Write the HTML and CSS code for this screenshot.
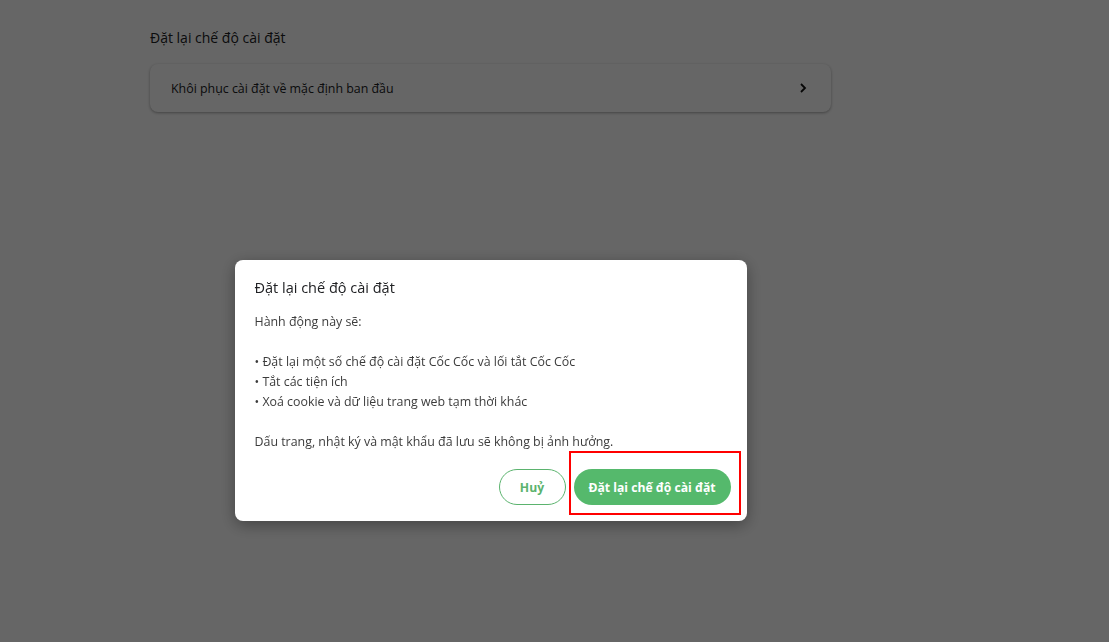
FILE: index.html
```html
<!DOCTYPE html>
<html lang="vi">
<head>
<meta charset="utf-8">
<title>Cài đặt</title>
<link rel="stylesheet" href="styles.css">
</head>
<body>
  <main class="settings">
    <h2 class="section-title">Đặt lại chế độ cài đặt</h2>
    <div class="card">
      <div class="row">
        <span>Khôi phục cài đặt về mặc định ban đầu</span>
        <svg class="chev" width="12" height="12" viewBox="0 0 12 12"><path d="M4 2l4 4-4 4" fill="none" stroke="#111" stroke-width="1.8"/></svg>
      </div>
    </div>
  </main>

  <div class="scrim">
    <div class="dialog">
      <h3 class="dialog-title">Đặt lại chế độ cài đặt</h3>
      <div class="dialog-body">
        <p>Hành động này sẽ:</p>
        <p>• Đặt lại một số chế độ cài đặt Cốc Cốc và lối tắt Cốc Cốc<br>• Tắt các tiện ích<br>• Xoá cookie và dữ liệu trang web tạm thời khác</p>
        <p>Dấu trang, nhật ký và mật khẩu đã lưu sẽ không bị ảnh hưởng.</p>
      </div>
      <div class="actions">
        <button class="btn btn-outline">Huỷ</button>
        <button class="btn btn-primary">Đặt lại chế độ cài đặt</button>
        <span class="focus-mark"></span>
      </div>
    </div>
  </div>
</body>
</html>
```

FILE: styles.css
```css
html, body {
  margin: 0;
  height: 100%;
}
body {
  font-family: "Segoe UI", "Open Sans", "Noto Sans", sans-serif;
  background: #ffffff;
  color: #202124;
  overflow: hidden;
}
.settings {
  padding: 28px 0 0 150px;
  width: 681px;
}
.section-title {
  margin: 0 0 16px 0;
  font-size: 14px;
  font-weight: 400;
  line-height: 20px;
}
.card {
  background: #ffffff;
  border-radius: 8px;
  box-shadow: 0 1px 3px rgba(0,0,0,0.35);
}
.row {
  height: 48px;
  display: flex;
  align-items: center;
  justify-content: space-between;
  padding: 0 22px 0 21px;
  font-size: 12.4px;
}
.scrim {
  position: fixed;
  inset: 0;
  background: rgba(0,0,0,0.6);
  display: flex;
  justify-content: center;
  padding-top: 260px;
  box-sizing: border-box;
}
.dialog {
  position: relative;
  align-self: flex-start;
  margin-left: -128px;
  width: 512px;
  height: 261px;
  box-sizing: border-box;
  background: #ffffff;
  border-radius: 8px;
  padding: 17px 16px 16px 20px;
  box-shadow: 0 4px 16px rgba(0,0,0,0.35);
}
.dialog-title {
  margin: 0 0 13px 0;
  font-size: 14.5px;
  font-weight: 400;
  line-height: 22px;
  color: #202124;
}
.dialog-body {
  font-size: 12.4px;
  line-height: 20px;
  color: #3c3c3c;
}
.dialog-body p {
  margin: 0 0 20px 0;
}
.dialog-body p:last-child {
  margin-bottom: 0;
}
.actions {
  position: relative;
  display: flex;
  justify-content: flex-end;
  gap: 8px;
  margin-top: 17px;
}
.btn {
  height: 36px;
  border-radius: 18px;
  font-family: inherit;
  font-size: 12.2px;
  font-weight: 700;
  cursor: pointer;
}
.btn-outline {
  width: 67px;
  background: #ffffff;
  color: #5bb36e;
  border: 1px solid #5bb36e;
}
.btn-primary {
  width: 157px;
  background: #55b96c;
  color: #ffffff;
  border: none;
}
.focus-mark {
  position: absolute;
  right: -10px;
  top: -18px;
  width: 168px;
  height: 60px;
  border: 2px solid #ff0000;
}
```
